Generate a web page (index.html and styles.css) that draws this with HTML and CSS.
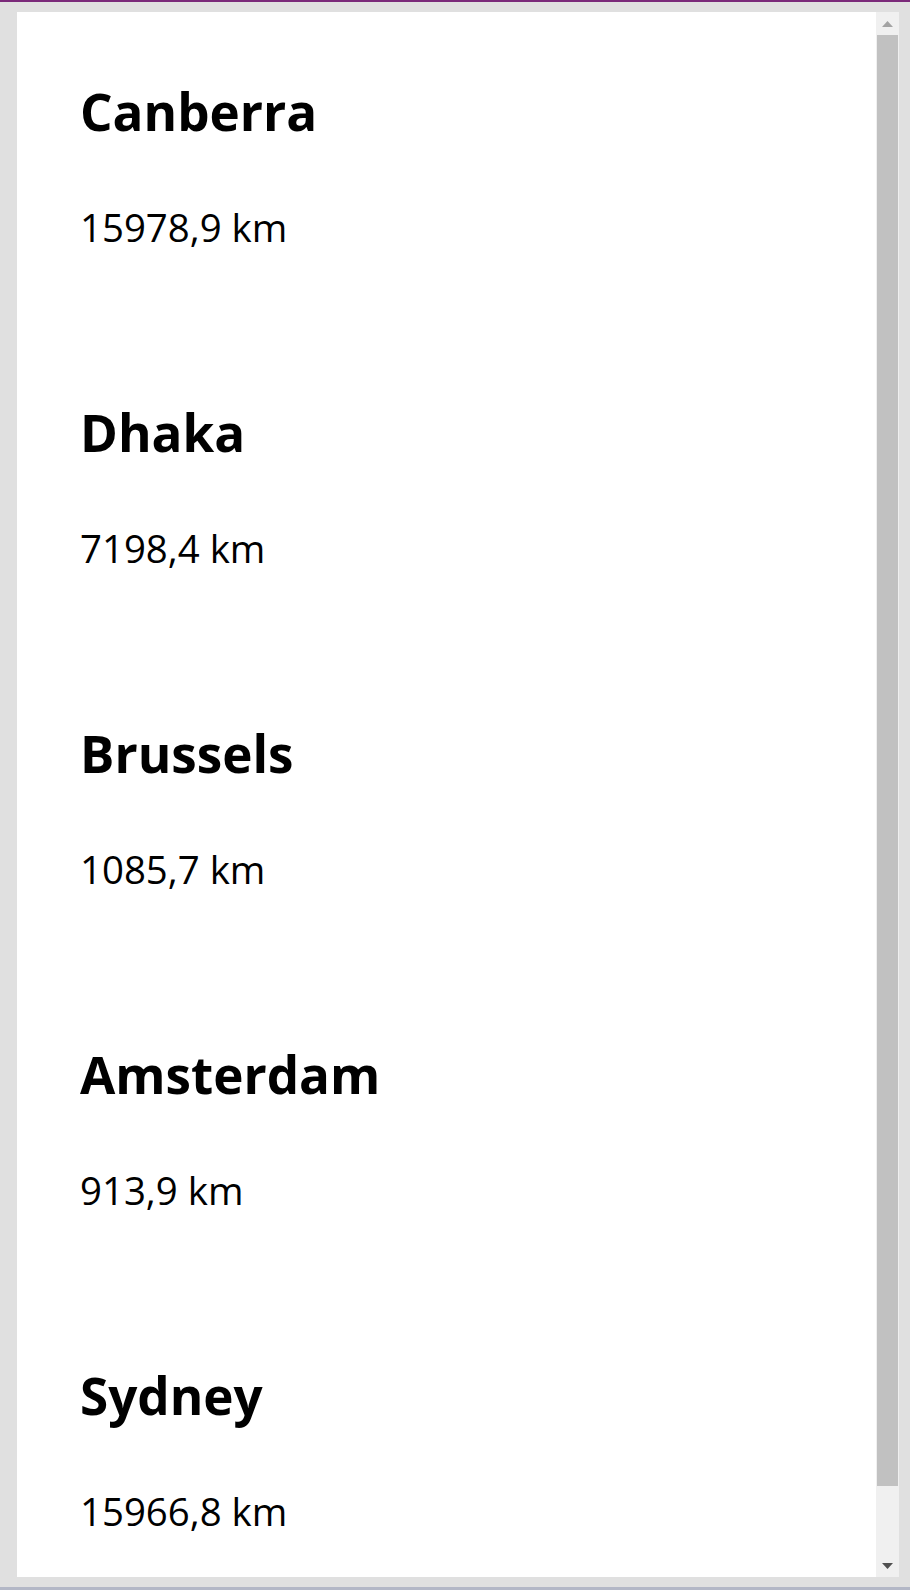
FILE: index.html
```html
<!DOCTYPE html>
<html lang="en">
<head>
<meta charset="utf-8">
<title>Distances</title>
<link rel="stylesheet" href="styles.css">
</head>
<body>
<div class="topbar"></div>
<div class="frame">
  <div class="panel">
    <div class="content">
      <div class="item">
        <h2 class="city">Canberra</h2>
        <p class="dist">15978,9 km</p>
      </div>
      <div class="item">
        <h2 class="city">Dhaka</h2>
        <p class="dist">7198,4 km</p>
      </div>
      <div class="item">
        <h2 class="city">Brussels</h2>
        <p class="dist">1085,7 km</p>
      </div>
      <div class="item">
        <h2 class="city">Amsterdam</h2>
        <p class="dist">913,9 km</p>
      </div>
      <div class="item">
        <h2 class="city">Sydney</h2>
        <p class="dist">15966,8 km</p>
      </div>
    </div>
    <div class="scrollbar">
      <div class="sb-btn">
        <svg width="11" height="6" viewBox="0 0 11 6"><polygon points="5.5,0 11,6 0,6" fill="#a3a3a3"/></svg>
      </div>
      <div class="sb-track">
        <div class="sb-thumb"></div>
      </div>
      <div class="sb-btn">
        <svg width="11" height="6" viewBox="0 0 11 6"><polygon points="0,0 11,0 5.5,6" fill="#505050"/></svg>
      </div>
    </div>
  </div>
</div>
<div class="bottombar"></div>
</body>
</html>
```

FILE: styles.css
```css
html, body {
  margin: 0;
  padding: 0;
}
body {
  width: 910px;
  height: 1590px;
  background: #e0e0e0;
  font-family: "Open Sans", "Noto Sans", sans-serif;
  color: #000;
  overflow: hidden;
  display: flex;
  flex-direction: column;
}
.topbar {
  height: 2px;
  background: #7b2a7a;
  flex: none;
}
.frame {
  flex: 1;
  padding: 10px 11px 10px 17px;
  display: flex;
  min-height: 0;
}
.panel {
  flex: 1;
  background: #fff;
  display: flex;
  overflow: hidden;
}
.content {
  flex: 1;
  padding: 67px 0 0 63px;
  overflow: hidden;
}
.city {
  margin: 0 0 58px;
  font-size: 51.2px;
  line-height: 64px;
  font-weight: 700;
}
.dist {
  margin: 0 0 147px;
  font-size: 38.4px;
  line-height: 52px;
  font-weight: 400;
}
.scrollbar {
  width: 23px;
  flex: none;
  background: #f0f0f0;
  display: flex;
  flex-direction: column;
}
.sb-btn {
  height: 23px;
  flex: none;
  display: flex;
  align-items: center;
  justify-content: center;
}
.sb-btn svg {
  display: block;
}
.sb-track {
  flex: 1;
  display: flex;
  flex-direction: column;
}
.sb-thumb {
  height: 1451px;
  margin: 0 1px;
  background: #c1c1c1;
}
.bottombar {
  height: 3px;
  background: #b3b7c6;
  flex: none;
}
```
